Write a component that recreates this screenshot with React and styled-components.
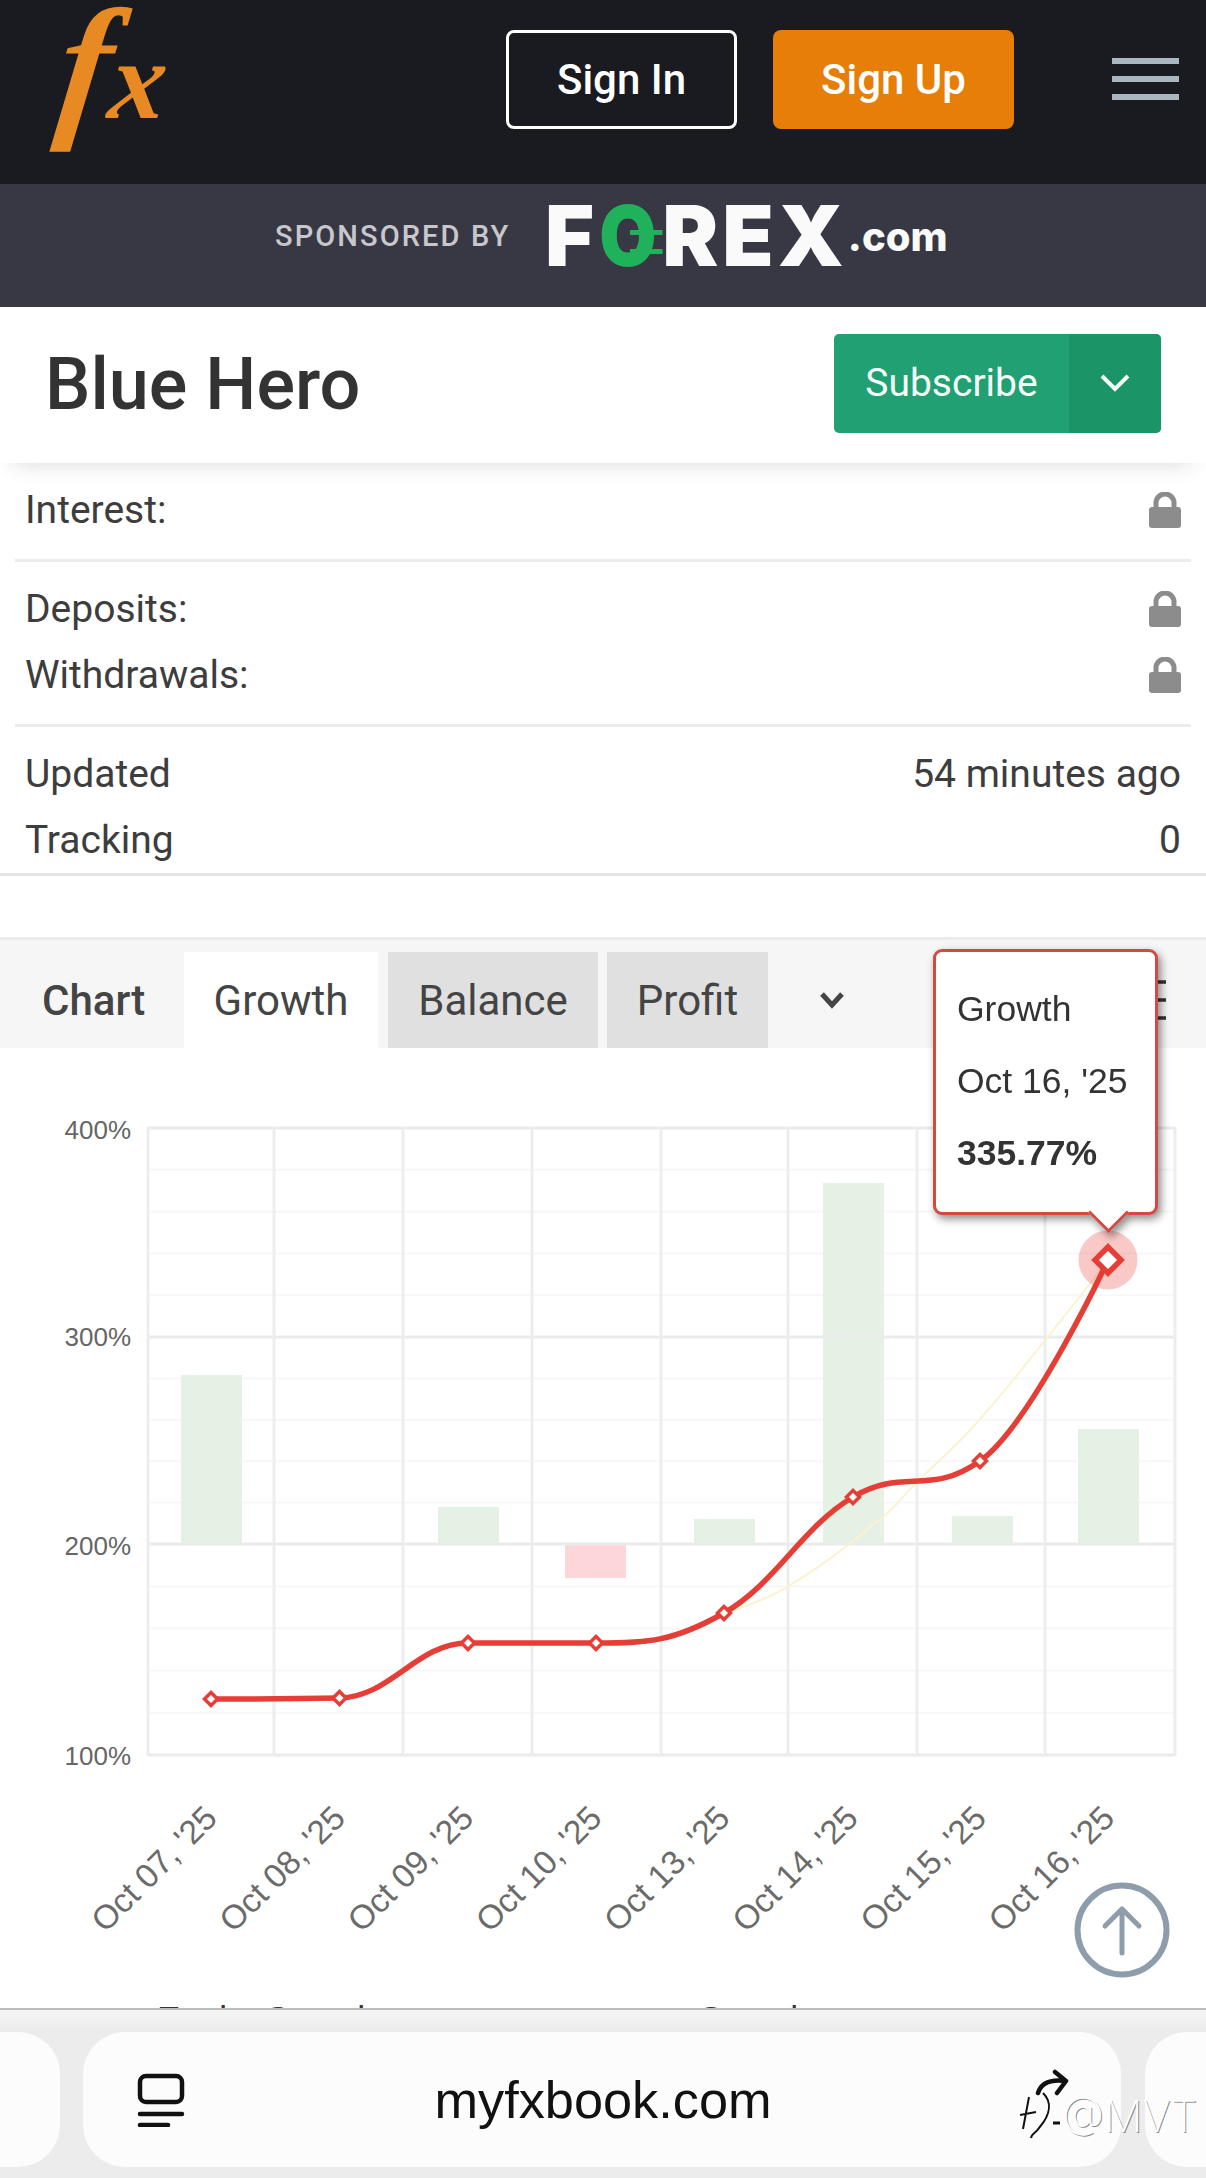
import React from 'react';
import styled, { createGlobalStyle } from 'styled-components';

const Global = createGlobalStyle`
  html, body { margin: 0; padding: 0; background: #fff; }
  body { font-family: Roboto, "Liberation Sans", sans-serif; color: #3d3d3d; overflow: hidden; }
  * { box-sizing: border-box; }
`;

const Page = styled.div`
  position: relative;
  width: 1206px;
  height: 2178px;
  overflow: hidden;
  background: #fff;
`;

/* header */
const Header = styled.header`
  display: flex;
  height: 184px;
  background: #1a1a21;
`;
const Logo = styled.div`
  display: block;
  height: 184px;
  margin-left: 56px;
  margin-right: auto;
  font-family: "Liberation Serif", serif;
  font-style: italic;
  font-weight: 700;
  color: #e88a24;
  line-height: 130px;
  font-size: 112px;
  white-space: nowrap;
  transform-origin: 0 98px;
  transform: skewX(-7deg);
  &::first-letter {
    font-size: 158px;
  }
`;
const AuthButton = styled.button`
  width: ${p => p.$w}px;
  height: 99px;
  margin-top: 30px;
  margin-left: ${p => p.$ml}px;
  border-radius: 8px;
  border: ${p => (p.$solid ? '0' : '3px solid #fff')};
  background: ${p => (p.$solid ? '#e67e07' : 'transparent')};
  color: #fff;
  font: 500 42px Roboto, sans-serif;
`;
const Burger = styled.div`
  display: flex;
  flex-direction: column;
  gap: 12px;
  margin: 58px 27px 0 98px;
`;
const BurgerBar = styled.span`
  display: block;
  width: 67px;
  height: 6px;
  background: #a9b7c1;
`;

/* sponsor band */
const Sponsor = styled.div`
  display: flex;
  align-items: center;
  height: 123px;
  padding: 0 0 19px 275px;
  background: #383845;
`;
const SponsorLabel = styled.span`
  width: 270px;
  font: 500 29px Roboto, sans-serif;
  letter-spacing: 2.1px;
  color: #c8c8cc;
  white-space: nowrap;
`;
const ForexMark = styled.span`
  display: flex;
  align-items: baseline;
  font: 900 84px Inter, sans-serif;
  letter-spacing: 4px;
  color: #fafafa;
  line-height: 1;
`;
const ForexO = styled.span`
  position: relative;
  color: #1fb25a;
  margin: 0 -2px 0 -3px;
  transform: scaleX(0.88);
  &::after {
    content: '';
    position: absolute;
    left: 50%;
    top: 36px;
    width: 37px;
    height: 14px;
    border-top: 5px solid #1fb25a;
    border-bottom: 5px solid #1fb25a;
  }
`;
const ForexCom = styled.span`
  font: 800 40px Inter, sans-serif;
  letter-spacing: 0;
  margin-left: 0;
  transform: translateY(-15px);
`;

/* title */
const TitleBar = styled.div`
  position: relative;
  z-index: 1;
  display: flex;
  align-items: center;
  justify-content: space-between;
  height: 156px;
  padding: 0 45px 0 45px;
  background: #fff;
  box-shadow: 0 14px 22px -14px rgba(0, 0, 0, 0.16);
`;
const Title = styled.h1`
  margin: 0 0 2px;
  font: 500 72px Roboto, sans-serif;
  color: #333;
`;
const SubscribeGroup = styled.div`
  display: flex;
  width: 327px;
  height: 99px;
  margin-top: -4px;
  border-radius: 5px;
  overflow: hidden;
  background: #21a073;
  color: #f4fffa;
`;
const SubscribeLabel = styled.span`
  flex: 1;
  display: flex;
  align-items: center;
  justify-content: center;
  font: 400 39px Roboto, sans-serif;
`;
const SubscribeCaret = styled.span`
  display: flex;
  align-items: center;
  justify-content: center;
  width: 92px;
  background: #1b9468;
`;

/* stats */
const Stats = styled.section`
  padding-top: 14px;
`;
const StatGroup = styled.div`
  margin: 0 15px;
  padding: ${p => p.$pt || 0}px 10px ${p => p.$pb || 0}px;
  border-bottom: ${p => (p.$last ? 0 : '3px solid #ececec')};
`;
const StatRow = styled.div`
  display: flex;
  align-items: center;
  justify-content: space-between;
  height: 66px;
  font: 400 39px Roboto, sans-serif;
  color: #3d3d3d;
`;
const FullRule = styled.div`
  height: 3px;
  background: #e4e4e4;
`;

/* chart panel */
const ChartPanel = styled.section`
  position: relative;
  margin-top: 61px;
  border-top: 3px solid #ececec;
`;
const TabBar = styled.div`
  display: flex;
  align-items: flex-end;
  height: 108px;
  padding-left: 42px;
  background: #f6f6f6;
`;
const TabTitle = styled.span`
  align-self: center;
  width: 142px;
  margin-top: 12px;
  font: 500 42px Roboto, sans-serif;
  color: #444;
`;
const Tab = styled.div`
  display: flex;
  align-items: center;
  justify-content: center;
  width: ${p => p.$w}px;
  height: 96px;
  margin-right: ${p => p.$mr || 0}px;
  background: ${p => (p.$active ? '#fff' : '#e0e0e0')};
  font: 400 42px Roboto, sans-serif;
  color: #444;
`;
const TabCaret = styled.span`
  display: flex;
  align-self: center;
  margin: 12px 0 0 51px;
`;
const TabTools = styled.span`
  display: flex;
  align-self: center;
  margin: 12px 0 0 auto;
  padding-right: 36px;
`;
const Tooltip = styled.div`
  position: absolute;
  left: 933px;
  top: 9px;
  width: 225px;
  height: 266px;
  padding: 21px 0 0 21px;
  background: #fff;
  border: 3.5px solid #d24a41;
  border-radius: 9px;
  font: 400 35.5px/72px "Liberation Sans", sans-serif;
  color: #333;
  filter: drop-shadow(3px 4px 4px rgba(0, 0, 0, 0.45));
  &::after {
    content: '';
    position: absolute;
    left: 158px;
    bottom: -15px;
    width: 26px;
    height: 26px;
    background: #fff;
    border-right: 3.5px solid #d24a41;
    border-bottom: 3.5px solid #d24a41;
    transform: rotate(45deg);
  }
`;
const TooltipValue = styled.b`
  display: block;
  font-weight: 700;
`;
const ChartFrame = styled.svg`
  display: block;
  width: 1206px;
  height: 952px;
  font-family: "Liberation Sans", sans-serif;
`;
const Legend = styled.div`
  display: flex;
  margin-top: -1px;
  padding-left: 157px;
  font: 400 35px "Liberation Sans", sans-serif;
  color: #333;
`;
const LegendItem = styled.span`
  flex: none;
  width: 540px;
`;

/* overlay: scroll top */
const ScrollTop = styled.button`
  position: absolute;
  left: 1074px;
  top: 1882px;
  width: 96px;
  height: 96px;
  padding: 0;
  border: 0;
  background: transparent;
`;

/* browser bar */
const BrowserBar = styled.footer`
  position: absolute;
  left: 0;
  right: 0;
  bottom: 0;
  height: 170px;
  display: flex;
  gap: 24px;
  padding-top: 22px;
  border-top: 2px solid #bcbcbc;
  background: linear-gradient(#f5f5f5, #ececec 20px);
`;
const SidePill = styled.div`
  flex: none;
  width: ${p => p.$w}px;
  height: 135px;
  margin-left: ${p => p.$ml || 0}px;
  background: #fcfcfc;
  border-radius: 42px;
`;
const AddressPill = styled.div`
  flex: none;
  display: grid;
  grid-template-columns: 1fr auto 1fr;
  align-items: center;
  width: 1038px;
  height: 135px;
  margin-left: -1px;
  padding: 0 52px 0 54px;
  background: #fcfcfc;
  border-radius: 42px;
`;
const Address = styled.span`
  font: 400 52.3px "Liberation Sans", sans-serif;
  color: #111;
`;
const ShareSlot = styled.span`
  justify-self: end;
  display: flex;
  margin-bottom: 34px;
`;
const Watermark = styled.div`
  position: absolute;
  left: 1018px;
  top: 2090px;
  display: flex;
  align-items: center;
  font: 200 43px Inter, sans-serif;
  color: #fff;
  text-shadow: 1px 1px 0 rgba(0, 0, 0, 0.45);
`;

const Lock = () => (
  <svg width="32" height="36" viewBox="0 0 32 36">
    <path d="M7 16V11a9 9 0 0 1 18 0v5" fill="none" stroke="#8c8c8c" strokeWidth="5" />
    <rect x="0" y="15" width="32" height="21" rx="3" fill="#8c8c8c" />
  </svg>
);

const W = 1206;
const xs = [211, 339.5, 468, 596, 724, 853, 980, 1108];
const growth = [1699, 1698, 1643, 1643, 1613, 1497, 1461, 1260];
const linePts = xs.map((x, i) => [x, growth[i]]);
const trendPts = [[724, 1613], [787, 1587], [883, 1517], [916, 1483], [973, 1427], [1047, 1338], [1108, 1260]];
const vLines = [148, 274, 403, 532, 661, 788, 917, 1045, 1175];
const bars = [
  { x: 181, top: 1375, bottom: 1544 },
  { x: 438, top: 1507, bottom: 1544 },
  { x: 565, top: 1544, bottom: 1578, red: true },
  { x: 694, top: 1519, bottom: 1544 },
  { x: 823, top: 1183, bottom: 1544 },
  { x: 952, top: 1516, bottom: 1544 },
  { x: 1078, top: 1429, bottom: 1544 },
];
const labels = ["Oct 07, '25", "Oct 08, '25", "Oct 09, '25", "Oct 10, '25", "Oct 13, '25", "Oct 14, '25", "Oct 15, '25", "Oct 16, '25"];
const majors = [[1128, '400%', 1139], [1337, '300%', 1346], [1544, '200%', 1555], [1755, '100%', 1765]];

function spline(pts) {
  const s = 1.5;
  const d = 2.5;
  const ctrl = pts.map((p, i) => {
    const prev = pts[i - 1];
    const next = pts[i + 1];
    if (!prev || !next) return { l: p, r: p };
    let lx = (s * p[0] + prev[0]) / d;
    let ly = (s * p[1] + prev[1]) / d;
    const rx = (s * p[0] + next[0]) / d;
    let ry = (s * p[1] + next[1]) / d;
    const c = ((ry - ly) * (rx - p[0])) / (rx - lx) + p[1] - ry;
    ly += c;
    ry += c;
    if (ly > prev[1] && ly > p[1]) { ly = Math.max(prev[1], p[1]); ry = 2 * p[1] - ly; }
    else if (ly < prev[1] && ly < p[1]) { ly = Math.min(prev[1], p[1]); ry = 2 * p[1] - ly; }
    if (ry > next[1] && ry > p[1]) { ry = Math.max(next[1], p[1]); ly = 2 * p[1] - ry; }
    else if (ry < next[1] && ry < p[1]) { ry = Math.min(next[1], p[1]); ly = 2 * p[1] - ry; }
    return { l: [lx, ly], r: [rx, ry] };
  });
  let out = `M${pts[0][0]} ${pts[0][1]}`;
  for (let i = 1; i < pts.length; i++) {
    const a = ctrl[i - 1].r;
    const b = ctrl[i].l;
    out += ` C${a[0]} ${a[1]} ${b[0]} ${b[1]} ${pts[i][0]} ${pts[i][1]}`;
  }
  return out;
}

const diamond = (x, y, r) => `M${x} ${y - r} L${x + r} ${y} L${x} ${y + r} L${x - r} ${y} Z`;

const Chart = () => {
  const minor = [];
  for (let m = 0; m < 3; m++) {
    const a = majors[m][0];
    const b = majors[m + 1][0];
    for (let k = 1; k < 5; k++) minor.push(a + ((b - a) * k) / 5);
  }
  return (
    <ChartFrame viewBox={`0 1048 ${W} 952`}>
      {minor.map(y => <line key={y} x1="148" x2="1175" y1={y} y2={y} stroke="#f7f7f7" strokeWidth="2" />)}
      {bars.map(b => (
        <rect key={b.x} x={b.x} y={b.top} width="61" height={b.bottom - b.top} fill={b.red ? '#fdd6da' : '#e4f1e4'} />
      ))}
      {majors.map(([y]) => <line key={y} x1="148" x2="1175" y1={y} y2={y} stroke="#ebebeb" strokeWidth="3" />)}
      {vLines.map(x => <line key={x} x1={x} x2={x} y1="1127" y2="1756" stroke="#ededed" strokeWidth="3" />)}
      {majors.map(([, t, base]) => (
        <text key={t} x="131" y={base} textAnchor="end" fontSize="26" fill="#666">{t}</text>
      ))}
      <path d={spline(trendPts)} fill="none" stroke="#fbf3cf" strokeWidth="2" />
      <path d={spline(linePts)} fill="none" stroke="#e53e36" strokeWidth="5.5" />
      {linePts.slice(0, 7).map(([x, y]) => (
        <path key={x} d={diamond(x, y, 6.5)} fill="#fff" stroke="#e53e36" strokeWidth="3.5" />
      ))}
      <circle cx="1108" cy="1260" r="29.5" fill="#e53e36" fillOpacity="0.28" />
      <path d={diamond(1108, 1260, 13)} fill="#fff" stroke="#e53e36" strokeWidth="5.5" />
      {labels.map((t, i) => {
        const x = 219 + i * 128.2;
        return (
          <text key={t} x={x} y="1820" textAnchor="end" fontSize="33.5" fill="#6b6b6b" transform={`rotate(-45 ${x} 1820)`}>{t}</text>
        );
      })}
    </ChartFrame>
  );
};

export default function App() {
  return (
    <Page>
      <Global />
      <Header>
        <Logo>fx</Logo>
        <AuthButton $w={231}>Sign In</AuthButton>
        <AuthButton $w={241} $ml={36} $solid>Sign Up</AuthButton>
        <Burger><BurgerBar /><BurgerBar /><BurgerBar /></Burger>
      </Header>
      <Sponsor>
        <SponsorLabel>SPONSORED BY</SponsorLabel>
        <ForexMark>F<ForexO>O</ForexO>REX<ForexCom>.com</ForexCom></ForexMark>
      </Sponsor>
      <TitleBar>
        <Title>Blue Hero</Title>
        <SubscribeGroup>
          <SubscribeLabel>Subscribe</SubscribeLabel>
          <SubscribeCaret>
            <svg width="30" height="18" viewBox="0 0 30 18"><path d="M2 2 L15 15 L28 2" fill="none" stroke="#f4fffa" strokeWidth="4" /></svg>
          </SubscribeCaret>
        </SubscribeGroup>
      </TitleBar>
      <Stats>
        <StatGroup $pb={16}>
          <StatRow>Interest:<Lock /></StatRow>
        </StatGroup>
        <StatGroup $pt={14} $pb={16}>
          <StatRow>Deposits:<Lock /></StatRow>
          <StatRow>Withdrawals:<Lock /></StatRow>
        </StatGroup>
        <StatGroup $pt={14} $last>
          <StatRow><span>Updated</span><span>54 minutes ago</span></StatRow>
          <StatRow><span>Tracking</span><span>0</span></StatRow>
        </StatGroup>
        <FullRule />
      </Stats>
      <ChartPanel>
        <TabBar>
          <TabTitle>Chart</TabTitle>
          <Tab $w={194} $mr={10} $active>Growth</Tab>
          <Tab $w={210} $mr={9}>Balance</Tab>
          <Tab $w={161}>Profit</Tab>
          <TabCaret>
            <svg width="26" height="18" viewBox="0 0 26 18"><path d="M3 3 L13 14 L23 3" fill="none" stroke="#444" strokeWidth="5" /></svg>
          </TabCaret>
          <TabTools>
            <svg width="40" height="46" viewBox="0 0 40 46" fill="none" stroke="#333" strokeWidth="3.5">
              <path d="M2 5H36M2 23H36M2 41H36" />
              <circle cx="20" cy="5" r="4" fill="#333" />
              <circle cx="20" cy="41" r="4" fill="#333" />
            </svg>
          </TabTools>
        </TabBar>
        <Chart />
        <Tooltip>
          Growth<br />
          Oct 16, '25
          <TooltipValue>335.77%</TooltipValue>
        </Tooltip>
        <Legend>
          <LegendItem>Equity Growth</LegendItem>
          <LegendItem>Growth</LegendItem>
        </Legend>
      </ChartPanel>
      <ScrollTop aria-label="Back to top">
        <svg width="96" height="96" viewBox="0 0 96 96" fill="none" stroke="#8d9dab" strokeLinecap="round" strokeLinejoin="round">
          <circle cx="48" cy="48" r="44.5" strokeWidth="6" fill="rgba(255,255,255,0.5)" />
          <path d="M48 71V27M31 44 L48 27 L65 44" strokeWidth="5" />
        </svg>
      </ScrollTop>
      <BrowserBar>
        <SidePill $w={100} $ml={-40} />
        <AddressPill>
          <svg width="48" height="54" viewBox="0 0 48 54" fill="none" stroke="#111" strokeWidth="4.5" strokeLinecap="round">
            <rect x="3" y="3" width="42" height="26" rx="6" />
            <path d="M3 41H45M3 52H31" />
          </svg>
          <Address>myfxbook.com</Address>
          <ShareSlot>
            <svg width="34" height="27" viewBox="0 0 34 27" fill="none" stroke="#111" strokeWidth="4.5" strokeLinecap="round" strokeLinejoin="round">
              <path d="M3 24C6 14 16 10 31 12M20 3 L31 12 L22 24" />
            </svg>
          </ShareSlot>
        </AddressPill>
        <SidePill $w={100} />
      </BrowserBar>
      <Watermark>
        <svg width="44" height="50" viewBox="0 0 44 50" fill="none" stroke="#111" strokeWidth="2">
          <path d="M11 6L5 38M2 24L18 21M25 2C33 10 34 22 21 37C18 42 14 42 13 47" />
          <path d="M35 32H42" strokeWidth="3" />
        </svg>
        @MVT
      </Watermark>
    </Page>
  );
}
